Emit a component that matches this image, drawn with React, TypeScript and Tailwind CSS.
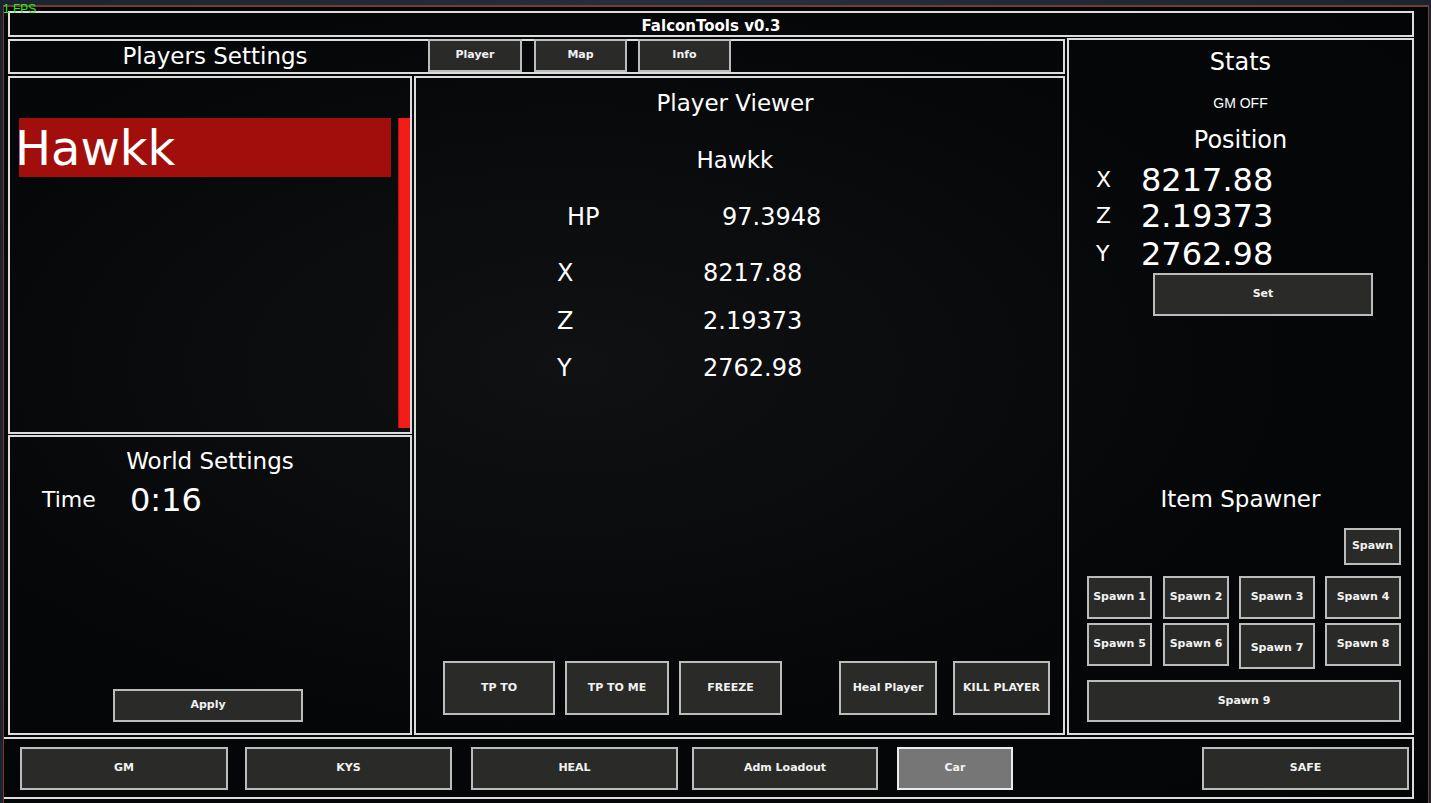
import React from 'react';

// Shared look for every in-game button (dark fill, light grey frame)
function Btn({ label, className = '' }: { label: string; className?: string }) {
  return (
    <div
      className={`flex items-center justify-center border-2 border-[#bcbcbc] bg-[#2a2b28] text-[11px] font-bold text-[#f2f2f2] font-['DejaVu_Sans',sans-serif] ${className}`}
    >
      {label}
    </div>
  );
}

const viewerRows = [
  { k: 'X', v: '8217.88', mt: 'mt-[26px]' },
  { k: 'Z', v: '2.19373', mt: 'mt-[18px]' },
  { k: 'Y', v: '2762.98', mt: 'mt-[17px]' },
];

const posRows = [
  { k: 'X', v: '8217.88', mt: 'mt-[7px]' },
  { k: 'Z', v: '2.19373', mt: 'mt-0' },
  { k: 'Y', v: '2762.98', mt: 'mt-[2px]' },
];

export default function App() {
  return (
    <div className="relative w-[1431px] h-[803px] overflow-hidden bg-[linear-gradient(90deg,#1a2430,#22303d_50%,#1a2430)] font-['DejaVu_Sans',sans-serif] text-white">
      {/* fps counter overlay */}
      <div className="absolute left-[3px] top-[3px] z-10 text-[12px] leading-none text-[#1ff01f] font-['Liberation_Sans',sans-serif]">
        1 FPS
      </div>

      {/* game window */}
      <div className="ml-[3px] mt-[5px] w-[1426px] h-[798px] border-t-2 border-l border-r border-[#7d3a2c] bg-[radial-gradient(ellipse_at_40%_45%,#0f1112_0%,#060708_55%,#030405_100%)]">
        {/* title bar */}
        <div className="ml-[4px] mt-[4px] w-[1406px] h-[26px] border-2 border-[#dcdcdc] flex items-center justify-center pt-[5px] text-[15px] font-bold leading-none">
          FalconTools v0.3
        </div>

        {/* main area */}
        <div className="ml-[4px] mt-[1px] flex h-[697px]">
          {/* left column */}
          <div className="w-[1057px] flex flex-col">
            {/* header with tabs */}
            <div className="mt-[1px] h-[35px] border-2 border-[#dcdcdc] flex items-start">
              <div className="w-[410px] h-full flex items-center justify-center text-[23px] leading-none">
                Players Settings
              </div>
              <Btn label="Player" className="ml-[8px] -mt-[2px] w-[94px] h-[33px]" />
              <Btn label="Map" className="ml-[12px] -mt-[2px] w-[93px] h-[33px]" />
              <Btn label="Info" className="ml-[11px] -mt-[2px] w-[93px] h-[33px]" />
            </div>

            <div className="mt-[2px] h-[659px] flex">
              {/* list + world settings */}
              <div className="w-[404px] flex flex-col">
                <div className="h-[358px] border-2 border-[#dcdcdc]">
                  <div className="mt-[40px] flex items-start">
                    <div className="ml-[9px] w-[372px] h-[59px] bg-[#a20e0b] flex items-center">
                      <span className="-ml-[4px] text-[48px] leading-none">Hawkk</span>
                    </div>
                    <div className="ml-[7px] w-[12px] h-[310px] bg-[#f21c19] border-l border-[#b81210]" />
                  </div>
                </div>
                <div className="mt-[1px] h-[300px] border-2 border-[#dcdcdc] flex flex-col">
                  <div className="mt-[10px] h-[28px] flex items-center justify-center text-[23px] leading-none">
                    World Settings
                  </div>
                  <div className="mt-[6px] h-[38px] flex items-center pl-[32px]">
                    <span className="w-[88px] text-[22px] leading-none">Time</span>
                    <span className="text-[32px] leading-none">0:16</span>
                  </div>
                  <Btn label="Apply" className="mt-auto mb-[11px] ml-[103px] w-[190px] h-[33px]" />
                </div>
              </div>

              {/* player viewer */}
              <div className="ml-[2px] w-[651px] border-2 border-[#dcdcdc] flex flex-col">
                <div className="mt-[11px] h-[28px] pr-[9px] flex items-center justify-center text-[23px] leading-none">
                  Player Viewer
                </div>
                <div className="mt-[29px] h-[28px] pr-[9px] flex items-center justify-center text-[23px] leading-none">
                  Hawkk
                </div>
                <div className="mt-[28px] h-[30px] pl-[151px] flex items-center text-[24px] leading-none">
                  <span className="w-[155px]">HP</span>
                  <span>97.3948</span>
                </div>
                {viewerRows.map((r) => (
                  <div key={r.k} className={`${r.mt} h-[30px] pl-[141px] flex items-center text-[24px] leading-none`}>
                    <span className="w-[146px]">{r.k}</span>
                    <span>{r.v}</span>
                  </div>
                ))}
                <div className="mt-auto mb-[18px] ml-[27px] flex">
                  <Btn label="TP TO" className="w-[112px] h-[54px]" />
                  <Btn label="TP TO ME" className="ml-[10px] w-[104px] h-[54px]" />
                  <Btn label="FREEZE" className="ml-[10px] w-[103px] h-[54px]" />
                  <Btn label="Heal Player" className="ml-[57px] w-[98px] h-[54px]" />
                  <Btn label="KILL PLAYER" className="ml-[16px] w-[97px] h-[54px]" />
                </div>
              </div>
            </div>
          </div>

          {/* stats + item spawner */}
          <div className="ml-[2px] w-[347px] h-[697px] border-2 border-[#dcdcdc] flex flex-col">
            <div className="mt-[7px] h-[30px] flex items-center justify-center text-[24px] leading-none">Stats</div>
            <div className="mt-[18px] h-[16px] flex items-center justify-center text-[14px] leading-none font-['Liberation_Sans',sans-serif]">
              GM OFF
            </div>
            <div className="mt-[14px] h-[30px] flex items-center justify-center text-[24px] leading-none">Position</div>
            {posRows.map((r) => (
              <div key={r.k} className={`${r.mt} h-[36px] pl-[27px] flex items-center leading-none`}>
                <span className="w-[45px] text-[22px]">{r.k}</span>
                <span className="text-[32px]">{r.v}</span>
              </div>
            ))}
            <Btn label="Set" className="mt-[1px] ml-[84px] w-[220px] h-[43px]" />

            <div className="mt-[168px] h-[30px] flex items-center justify-center text-[23px] leading-none">
              Item Spawner
            </div>
            <Btn label="Spawn" className="mt-[14px] self-end mr-[11px] w-[57px] h-[37px]" />
            <div className="mt-[11px] ml-[18px] flex items-start">
              <Btn label="Spawn 1" className="w-[65px] h-[43px]" />
              <Btn label="Spawn 2" className="ml-[11px] w-[66px] h-[43px]" />
              <Btn label="Spawn 3" className="ml-[10px] w-[76px] h-[43px]" />
              <Btn label="Spawn 4" className="ml-[10px] w-[76px] h-[43px]" />
            </div>
            <div className="mt-[4px] ml-[18px] flex items-start">
              <Btn label="Spawn 5" className="w-[65px] h-[43px]" />
              <Btn label="Spawn 6" className="ml-[11px] w-[66px] h-[43px]" />
              <Btn label="Spawn 7" className="ml-[10px] w-[76px] h-[46px] pt-[4px]" />
              <Btn label="Spawn 8" className="ml-[10px] w-[76px] h-[43px]" />
            </div>
            <Btn label="Spawn 9" className="mt-[11px] ml-[18px] w-[314px] h-[42px]" />
          </div>
        </div>

        {/* bottom action bar */}
        <div className="mt-[2px] w-[1410px] h-[62px] border-y-2 border-r-2 border-[#dcdcdc] flex items-start pt-[8px]">
          <Btn label="GM" className="ml-[16px] w-[208px] h-[43px]" />
          <Btn label="KYS" className="ml-[17px] w-[207px] h-[43px]" />
          <Btn label="HEAL" className="ml-[19px] w-[207px] h-[43px]" />
          <Btn label="Adm Loadout" className="ml-[14px] w-[186px] h-[43px]" />
          <div className="ml-[19px] w-[116px] h-[43px] border-2 border-[#ececec] bg-[#767676] flex items-center justify-center text-[11px] font-bold text-[#f2f2f2]">
            Car
          </div>
          <Btn label="SAFE" className="ml-[189px] w-[207px] h-[43px]" />
        </div>
      </div>
    </div>
  );
}
